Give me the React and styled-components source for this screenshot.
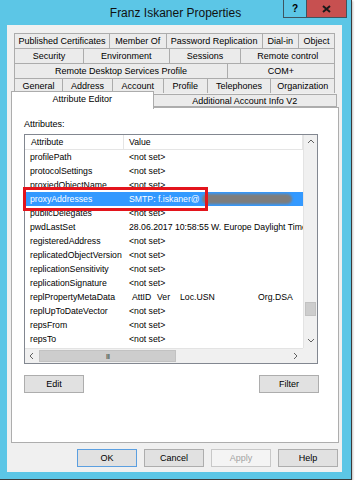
import React from "react";
import styled, { createGlobalStyle } from "styled-components";

const GlobalStyle = createGlobalStyle`
  html, body {
    margin: 0;
    padding: 0;
    background: #ffffff;
  }
  body {
    font-family: "Liberation Sans", Arial, sans-serif;
    font-size: 9px;
    color: #000;
  }
`;

const Window = styled.div`
  box-sizing: border-box;
  width: 352px;
  height: 480px;
  background: #5cc6e6;
  border-right: 1px solid #3b3b3b;
  border-bottom: 1px solid #3b3b3b;
  box-shadow: 1px 1px 2px rgba(0, 0, 0, 0.25);
  display: flex;
  flex-direction: column;
`;

const TitleBar = styled.div`
  height: 25px;
  display: grid;
  grid-template-columns: 1fr auto 1fr;
  align-items: start;
`;

const Title = styled.div`
  grid-column: 2;
  font-size: 12px;
  line-height: 26px;
  color: #111;
`;

const Controls = styled.div`
  grid-column: 3;
  justify-self: end;
  display: flex;
  margin-right: 4px;
`;

const CtrlButton = styled.div`
  box-sizing: border-box;
  width: ${(p) => p.$w}px;
  height: 18px;
  background: ${(p) => p.$bg};
  border: 1px solid #3e5560;
  border-top: none;
  border-left: ${(p) => (p.$first ? "1px solid #3e5560" : "none")};
  display: flex;
  align-items: center;
  justify-content: center;
  font-weight: bold;
  font-size: 10px;
`;

const Client = styled.div`
  flex: 1;
  margin: 0 9px 7px 7px;
  background: #f0f0f0;
  display: flex;
  flex-direction: column;
  padding-top: 8px;
`;

const TabRow = styled.div`
  display: flex;
  height: 15px;
  margin: 0 7px;
`;

const Tab = styled.div`
  box-sizing: border-box;
  flex: ${(p) => p.$w} 0 0;
  background: #ebebeb;
  border: 1px solid #acacac;
  border-bottom: none;
  margin-left: -1px;
  display: flex;
  align-items: center;
  justify-content: center;
  white-space: nowrap;
  &:first-child {
    margin-left: 0;
  }
`;

const FrontRow = styled.div`
  display: flex;
  height: 14px;
  margin: 0 5px 0 4px;
`;

const FrontTab = styled.div`
  box-sizing: border-box;
  position: relative;
  z-index: ${(p) => (p.$active ? 2 : 0)};
  flex: ${(p) => p.$w} 0 0;
  height: ${(p) => (p.$active ? 18 : 13)}px;
  margin-top: ${(p) => (p.$active ? -2 : 1)}px;
  background: ${(p) => (p.$active ? "#ffffff" : "#ebebeb")};
  border: 1px solid #acacac;
  border-bottom: ${(p) => (p.$active ? "none" : "1px solid #acacac")};
  border-left: ${(p) => (p.$active ? "1px solid #acacac" : "none")};
  display: flex;
  align-items: ${(p) => (p.$active ? "flex-start" : "center")};
  padding-top: ${(p) => (p.$active ? 2 : 0)}px;
  justify-content: center;
  white-space: nowrap;
`;

const Panel = styled.div`
  box-sizing: border-box;
  height: 336px;
  margin: 0 3px 0 4px;
  background: #ffffff;
  border: 1px solid #adadad;
  padding: 10px 20px 0 12px;
  display: flex;
  flex-direction: column;
`;

const Label = styled.div`
  line-height: 12px;
  margin-bottom: 4px;
`;

const ListBox = styled.div`
  position: relative;
  box-sizing: border-box;
  width: 294px;
  height: 230px;
  border: 1px solid #828790;
  display: grid;
  grid-template-columns: 1fr 14px;
  grid-template-rows: 1fr 15px;
`;

const Content = styled.div`
  overflow: hidden;
  font-size: 8.7px;
`;

const Header = styled.div`
  display: grid;
  grid-template-columns: 99px 1fr;
  height: 15px;
  box-sizing: border-box;
  border-bottom: 1px solid #e5e5e5;
`;

const HeadCell = styled.div`
  padding-left: ${(p) => p.$pad}px;
  line-height: 14px;
  border-right: 1px solid #e5e5e5;
`;

const Row = styled.div`
  display: grid;
  grid-template-columns: 99px 1fr;
  height: 14px;
  line-height: 14px;
  background: ${(p) => (p.$selected ? "#3399ff" : "transparent")};
  color: ${(p) => (p.$selected ? "#ffffff" : "#000")};
  white-space: nowrap;
`;

const Cell = styled.div`
  padding-left: ${(p) => p.$pad}px;
  overflow: hidden;
  display: flex;
  align-items: center;
`;

const MetaCol = styled.span`
  display: inline-block;
  width: ${(p) => p.$w}px;
`;

const Redacted = styled.span`
  display: inline-block;
  width: 90px;
  height: 10px;
  margin-left: 2px;
  background: #7d7d7d;
  border-radius: 5px;
  filter: blur(1.2px);
`;

const Highlight = styled.div`
  position: absolute;
  left: -2px;
  top: 52px;
  width: 185px;
  height: 24px;
  box-sizing: border-box;
  border: 3px solid #e3141c;
  z-index: 3;
`;

const VScroll = styled.div`
  background: #f0f0f0;
  border-left: 1px solid #e3e3e3;
  display: flex;
  flex-direction: column;
`;

const HScroll = styled.div`
  background: #f0f0f0;
  border-top: 1px solid #e3e3e3;
  display: flex;
`;

const Arrow = styled.div`
  flex: 0 0 14px;
  height: 14px;
  display: flex;
  align-items: center;
  justify-content: center;
`;

const Track = styled.div`
  flex: 1;
  display: flex;
  flex-direction: ${(p) => (p.$vertical ? "column" : "row")};
`;

const Thumb = styled.div`
  box-sizing: border-box;
  background: #cdcdcd;
  border: 1px solid #c2c2c2;
  margin: ${(p) => (p.$vertical ? "0 1px" : "1px 0")};
  display: flex;
  align-items: center;
  justify-content: center;
  ${(p) => (p.$vertical ? `height: ${p.$size}px; margin-top: ${p.$offset}px;` : `width: ${p.$size}px;`)}
`;

const Grip = styled.span`
  font-size: 8px;
  letter-spacing: -1px;
  color: #555;
`;

const Corner = styled.div`
  background: #f0f0f0;
`;

const ButtonRow = styled.div`
  display: flex;
  justify-content: space-between;
  width: 295px;
  margin-top: 11px;
`;

const Button = styled.div`
  box-sizing: border-box;
  width: ${(p) => p.$w || 60}px;
  height: 18px;
  background: ${(p) => (p.$disabled ? "#f4f4f4" : "#e1e1e1")};
  border: 1px solid
    ${(p) => (p.$default ? "#5b9fe0" : p.$disabled ? "#c8c8c8" : "#adadad")};
  color: ${(p) => (p.$disabled ? "#a3a3a3" : "#000")};
  display: flex;
  align-items: center;
  justify-content: center;
`;

const Footer = styled.div`
  display: flex;
  justify-content: flex-end;
  gap: 7px;
  margin: 6px 4px 0 0;
`;

function Chevron({ dir }) {
  const pts = {
    up: "1,5 4,2 7,5",
    down: "1,2 4,5 7,2",
    left: "5,1 2,4 5,7",
    right: "2,1 5,4 2,7",
  }[dir];
  return (
    <svg width="8" height="8" viewBox="0 0 8 8">
      <polyline points={pts} fill="none" stroke="#606060" strokeWidth="1" />
    </svg>
  );
}

const backRows = [
  [
    ["Published Certificates", 96],
    ["Member Of", 57],
    ["Password Replication", 97],
    ["Dial-in", 36],
    ["Object", 36],
  ],
  [
    ["Security", 69],
    ["Environment", 86],
    ["Sessions", 72],
    ["Remote control", 94],
  ],
  [
    ["Remote Desktop Services Profile", 214],
    ["COM+", 107],
  ],
  [
    ["General", 48],
    ["Address", 50],
    ["Account", 51],
    ["Profile", 44],
    ["Telephones", 64],
    ["Organization", 64],
  ],
];

const rows = [
  ["profilePath", "<not set>"],
  ["protocolSettings", "<not set>"],
  ["proxiedObjectName", "<not set>"],
  ["proxyAddresses", "smtp"],
  ["publicDelegates", "<not set>"],
  ["pwdLastSet", "28.06.2017 10:58:55 W. Europe Daylight Time (0)"],
  ["registeredAddress", "<not set>"],
  ["replicatedObjectVersion", "<not set>"],
  ["replicationSensitivity", "<not set>"],
  ["replicationSignature", "<not set>"],
  ["replPropertyMetaData", "meta"],
  ["replUpToDateVector", "<not set>"],
  ["repsFrom", "<not set>"],
  ["repsTo", "<not set>"],
];

function ValueText({ value }) {
  if (value === "smtp") {
    return (
      <>
        SMTP: f.iskaner@
        <Redacted />
      </>
    );
  }
  if (value === "meta") {
    return (
      <span style={{ paddingLeft: 3 }}>
        <MetaCol $w={25}>AttID</MetaCol>
        <MetaCol $w={23}>Ver</MetaCol>
        <MetaCol $w={78}>Loc.USN</MetaCol>
        <MetaCol $w={50}>Org.DSA</MetaCol>
      </span>
    );
  }
  return value;
}

export default function App() {
  return (
    <>
      <GlobalStyle />
      <Window>
        <TitleBar>
          <Title>Franz Iskaner Properties</Title>
          <Controls>
            <CtrlButton $w={24} $bg="#5cc6e6" $first>
              ?
            </CtrlButton>
            <CtrlButton $w={40} $bg="#c75050">
              <svg width="9" height="8" viewBox="0 0 9 8">
                <path d="M1 1 L8 7 M8 1 L1 7" stroke="#1a1a1a" strokeWidth="2" />
              </svg>
            </CtrlButton>
          </Controls>
        </TitleBar>

        <Client>
          {backRows.map((r, i) => (
            <TabRow key={i}>
              {r.map(([label, w]) => (
                <Tab key={label} $w={w}>
                  {label}
                </Tab>
              ))}
            </TabRow>
          ))}
          <FrontRow>
            <FrontTab $active $w={142}>
              Attribute Editor
            </FrontTab>
            <FrontTab $w={184}>Additional Account Info V2</FrontTab>
          </FrontRow>

          <Panel>
            <Label>Attributes:</Label>
            <ListBox>
              <Content>
                <Header>
                  <HeadCell $pad={6}>Attribute</HeadCell>
                  <HeadCell $pad={5}>Value</HeadCell>
                </Header>
                {rows.map(([name, value]) => (
                  <Row key={name} $selected={value === "smtp"}>
                    <Cell $pad={5}>{name}</Cell>
                    <Cell $pad={5}>
                      <ValueText value={value} />
                    </Cell>
                  </Row>
                ))}
              </Content>
              <VScroll>
                <Arrow>
                  <Chevron dir="up" />
                </Arrow>
                <Track $vertical>
                  <Thumb $vertical $size={14} $offset={153} />
                </Track>
                <Arrow>
                  <Chevron dir="down" />
                </Arrow>
              </VScroll>
              <HScroll>
                <Arrow>
                  <Chevron dir="left" />
                </Arrow>
                <Track>
                  <Thumb $size={137}>
                    <Grip>III</Grip>
                  </Thumb>
                </Track>
                <Arrow>
                  <Chevron dir="right" />
                </Arrow>
              </HScroll>
              <Corner />
              <Highlight />
            </ListBox>
            <ButtonRow>
              <Button>Edit</Button>
              <Button>Filter</Button>
            </ButtonRow>
          </Panel>

          <Footer>
            <Button $default>OK</Button>
            <Button>Cancel</Button>
            <Button $disabled>Apply</Button>
            <Button>Help</Button>
          </Footer>
        </Client>
      </Window>
    </>
  );
}
